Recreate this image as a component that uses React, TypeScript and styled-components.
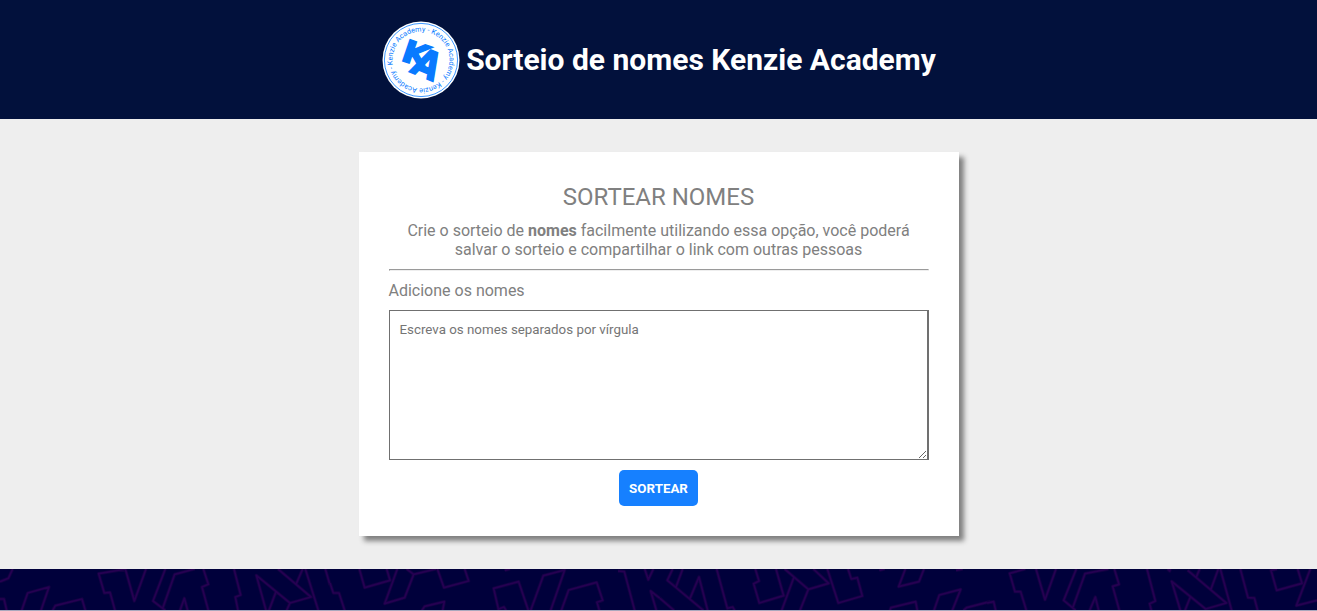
import React from "react";
import styled, { createGlobalStyle } from "styled-components";

const GlobalStyle = createGlobalStyle`
  * { margin: 0; padding: 0; box-sizing: border-box; }
  body { font-family: Roboto, sans-serif; background: #eee; }
`;

const Page = styled.div`
  display: flex;
  flex-direction: column;
  height: 611px;
  overflow: hidden;
`;

const Header = styled.header`
  display: flex;
  align-items: center;
  justify-content: center;
  gap: 5px;
  height: 119px;
  flex-shrink: 0;
  background: #02113c;
`;

const Logo = styled.svg`
  display: block;
  width: 80px;
  height: 80px;
`;

const Brand = styled.h1`
  color: #fff;
  font-size: 30px;
  font-weight: 700;
`;

const Main = styled.main`
  display: flex;
  justify-content: center;
  align-items: center;
  height: 450px;
  flex-shrink: 0;
`;

const Card = styled.form`
  display: flex;
  flex-direction: column;
  align-items: center;
  gap: 10px;
  width: 600px;
  height: 384px;
  padding: 30px;
  background: #fff;
  color: #808080;
  box-shadow: 5px 5px 5px #808080;
`;

const Title = styled.h2`
  padding-top: 1px;
  font-size: 24px;
  font-weight: 400;
  line-height: 28px;
`;

const Description = styled.p`
  width: 100%;
  font-size: 16px;
  line-height: 19px;
  text-align: center;
`;

const Divider = styled.hr`
  width: 100%;
`;

const Label = styled.label`
  align-self: flex-start;
  font-size: 16px;
  line-height: 19px;
`;

const NamesInput = styled.textarea`
  width: 100%;
  height: 150px;
  flex-shrink: 0;
  padding: 11px 10px 10px;
  border: 1px solid #707070;
  border-right-width: 2px;
  border-radius: 0;
  font-family: Roboto, sans-serif;
  font-size: 13.3333px;
`;

const DrawButton = styled.button`
  height: 36px;
  flex-shrink: 0;
  padding: 10px;
  border: 0;
  border-radius: 5px;
  background: #1680ff;
  color: #fff;
  font-family: Roboto, sans-serif;
  font-size: 13.3333px;
  font-weight: 700;
`;

const Footer = styled.footer`
  height: 42px;
  flex-shrink: 0;
  background: #00003b;
  border-bottom: 1px solid #a9a8bd;
`;

const Pattern = styled.svg`
  display: block;
  width: 100%;
  height: 41px;
`;

const sections = [
  {
    x: 0,
    d: "M0 62L25 52L38 24M0 114L12 114L20 148M65 148L83 96L147 78L123 148M158 148L166 134L246 114L256 148M378 24L296 38L313 96L330 94L345 148M376 24L403 120L438 24M496 24L459 120L488 142L524 40L584 24M488 142L496 148M610 24L625 70L606 78L625 148M540 148L553 112L563 148M702 24L722 102L706 108L714 148M798 148L769 43L870 126L933 108L834 24M870 126L860 148M908 24L888 70M828 92L807 148M916 24L955 148M976 24L990 72",
  },
  {
    x: 990,
    d: "M0 66L10 96L27 96L44 148M88 24L104 80L180 58L170 24M202 24L164 128L224 110L251 40L230 24M251 40L318 24M276 148L284 136L343 122L338 148M322 24L342 80L416 60L404 24M524 28L540 24M506 148L491 82L566 62L595 148M506 144L522 138L528 148M602 148L640 44L704 27L662 148M694 148L716 87L800 64L818 118L801 124L808 148M864 30L883 32L914 148M944 24L955 56L970 24M990 112L962 90L979 148",
  },
  {
    x: 1980,
    d: "M38 24L22 58L130 148M68 24L48 78M0 112L42 148M90 112L117 48L143 148M170 24L202 142L218 138L224 148M286 24L297 60L281 68L298 126L371 104L348 24M374 24L445 85L506 67L460 24M402 48L365 148M445 85L420 148M502 24L535 126L607 105L592 50L574 54L564 24M658 28L674 24M736 24L716 77L777 62L792 24M690 148L693 140L767 122L772 148M822 148L838 102L902 85L877 148M888 28L908 24M910 148L920 140L990 122",
  },
  {
    x: 2961,
    d: "M0 126L20 122L26 148M115 24L68 37L84 92L101 92L118 148M147 24L174 116L207 24M268 24L230 118L266 148M258 138L294 38L364 24M382 24L396 70L377 76L397 148M308 148L325 108L335 148M480 24L505 120L488 128L493 148M542 24L548 30L550 24M580 148L554 61L656 144L718 126L602 28M638 24L628 48M694 24L672 84M610 108L594 148M700 24L734 148M760 24L783 110L802 111L812 148M870 24L852 28L869 88L945 67L932 24M970 24L928 134L990 118",
  },
];

function KenzieLogo() {
  return (
    <Logo viewBox="0 0 80 80" role="img" aria-label="Kenzie Academy">
      <defs>
        <path id="ring" d="M40 68.5A28.5 28.5 0 1 1 40 11.5A28.5 28.5 0 1 1 40 68.5" />
      </defs>
      <circle cx="40" cy="40" r="38.5" fill="#fff" />
      <circle cx="40" cy="40" r="36.6" fill="none" stroke="#0b7cff" strokeWidth=".8" />
      <g fill="#087aff" fontFamily="Roboto, sans-serif" fontSize="7.2" transform="rotate(80 40 40)">
        <text>
          <textPath href="#ring" textLength="177" lengthAdjust="spacing">
            Kenzie Academy - Kenzie Academy - Kenzie Academy -
          </textPath>
        </text>
      </g>
      <g
        fill="#087aff"
        stroke="#087aff"
        strokeWidth=".45"
        fontFamily="'DejaVu Sans', sans-serif"
        fontWeight="700"
        fontSize="10"
      >
        <text transform="matrix(3.3 1.1 -1 2.92 18.7 39.9)">K</text>
        <text transform="matrix(3.1 1.28 -1.78 3.43 27.9 51.4)">A</text>
      </g>
    </Logo>
  );
}

export default function App() {
  return (
    <Page>
      <GlobalStyle />
      <Header>
        <KenzieLogo />
        <Brand>Sorteio de nomes Kenzie Academy</Brand>
      </Header>
      <Main>
        <Card onSubmit={(event: React.FormEvent) => event.preventDefault()}>
          <Title>SORTEAR NOMES</Title>
          <Description>
            Crie o sorteio de <strong>nomes</strong> facilmente utilizando essa opção, você poderá
            salvar o sorteio e compartilhar o link com outras pessoas
          </Description>
          <Divider />
          <Label htmlFor="names">Adicione os nomes</Label>
          <NamesInput id="names" placeholder="Escreva os nomes separados por vírgula" />
          <DrawButton type="submit">SORTEAR</DrawButton>
        </Card>
      </Main>
      <Footer>
        <Pattern viewBox="0 24 3951 123" preserveAspectRatio="none" aria-hidden="true">
          <g fill="none" strokeLinejoin="round">
            {sections.map((section) => (
              <g key={section.x} transform={`translate(${section.x} 0)`}>
                <path d={section.d} stroke="#120043" strokeWidth="10" />
                <path d={section.d} stroke="#260052" strokeWidth="5" />
              </g>
            ))}
          </g>
        </Pattern>
      </Footer>
    </Page>
  );
}
